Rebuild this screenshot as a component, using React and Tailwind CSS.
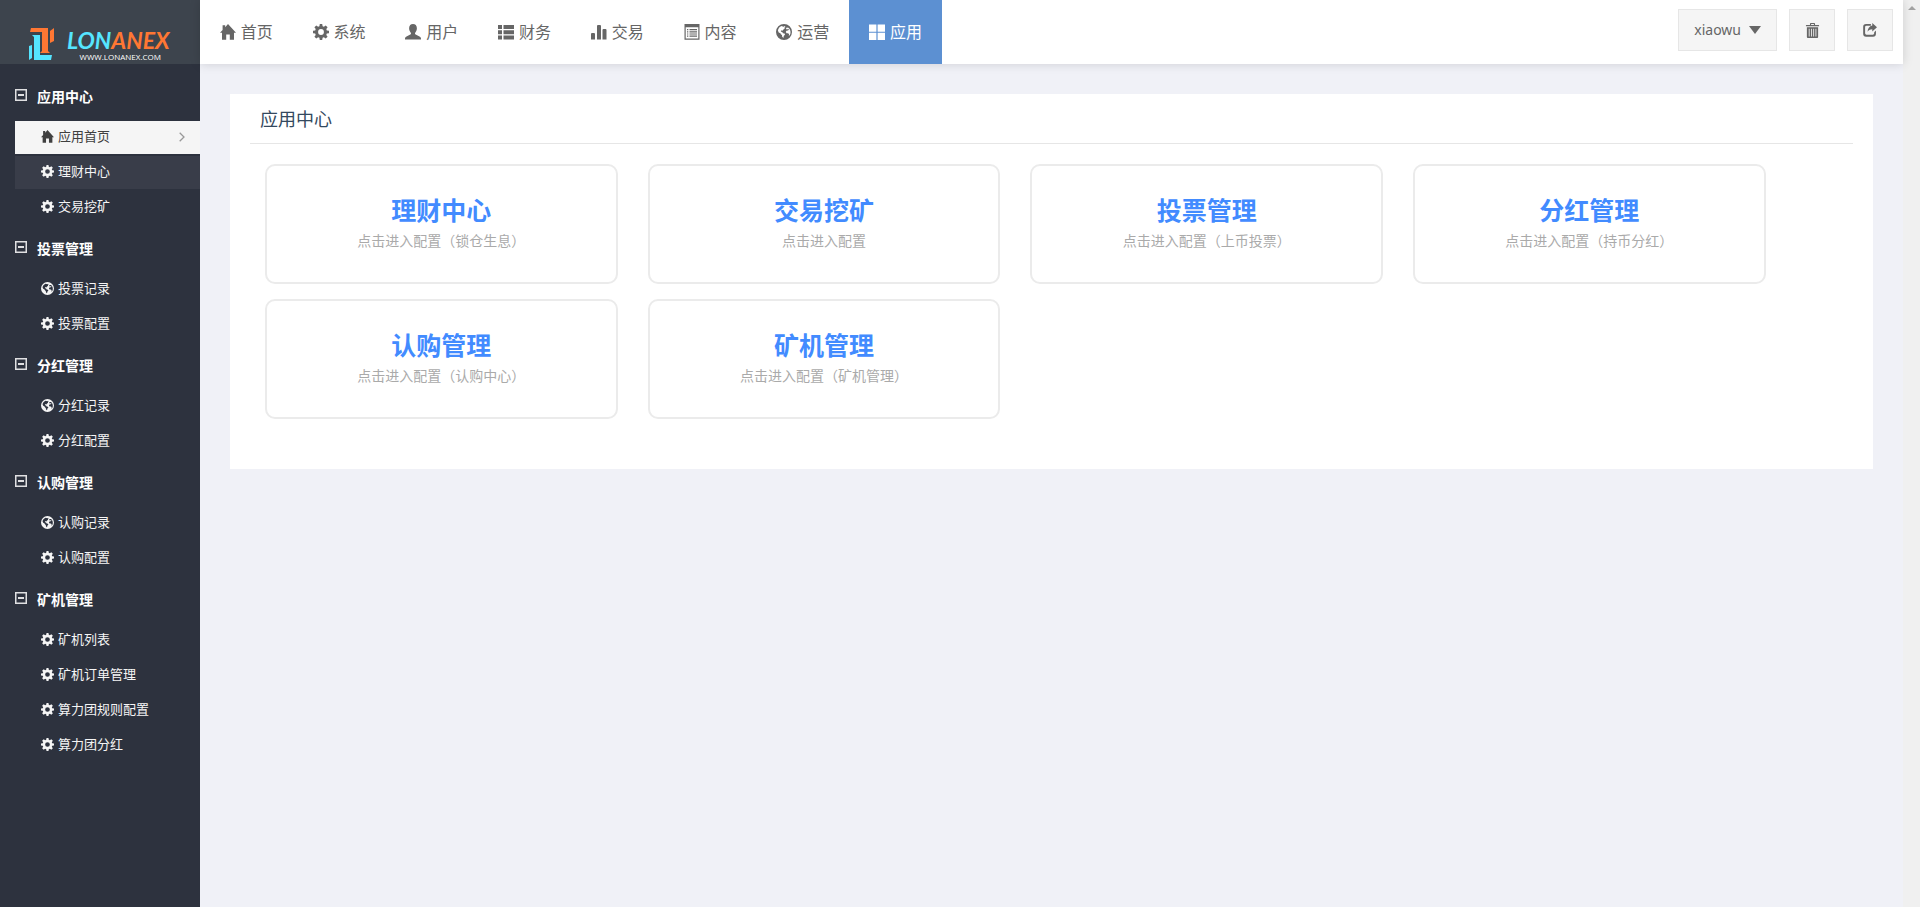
import { useState } from 'react'

const icons = {
  home: <path d="M8 0 16 8.8h-2V15.800H9.800v-5.300H6.200v5.300H2V8.800H0L2.600 6V1.300h2.600v2z" />,
  cog: (
    <path
      fillRule="evenodd"
      d="M6.8 0h2.4l.4 2.2 1.3.5L12.7 1.400l1.900 1.900-1.300 1.800.5 1.300L16 6.800v2.400l-2.200.4-.5 1.300 1.300 1.800-1.900 1.900-1.800-1.300-1.300.5L9.200 16H6.800l-.4-2.200-1.300-.5-1.800 1.300-1.900-1.900 1.300-1.800-.5-1.300L0 9.200V6.800l2.200-.4.5-1.300-1.300-1.800 1.900-1.900 1.800 1.300 1.300-.5zM8 5.100a2.900 2.900 0 1 0 0 5.800 2.900 2.900 0 0 0 0-5.800z"
    />
  ),
  user: (
    <path d="M8 0c2.300 0 3.900 1.600 3.900 4.200 0 1.700-.8 3.300-1.700 4.500-.4.600-.2 1.500.5 1.800l3.800 1.900c1.100.5 1.500 1.200 1.500 2.300V15.500H0V14.700c0-1.100.4-1.800 1.500-2.300l3.800-1.900c.7-.3.900-1.200.5-1.800C4.900 7.500 4.100 5.900 4.100 4.200 4.100 1.600 5.700 0 8 0z" />
  ),
  thList: <path d="M0 1h4v4H0zM5.500 1H16v4H5.500zM0 6.200h4v4H0zM5.500 6.200H16v4H5.500zM0 11.500h4v4H0zM5.500 11.500H16v4H5.500z" />,
  stats: (
    <path d="M0 10q0-1 1-1h2q1 0 1 1v5.500H0zM6 2q0-1 1-1h2q1 0 1 1v13.500H6zM11.500 6q0-1 1-1h2q1 0 1 1v9.500h-4z" />
  ),
  listAlt: (
    <path
      fillRule="evenodd"
      d="M.5 0h15v15.800H.5zM1.700 3.200v11.400h12.600V3.200zM3 5h1.300v1.200H3zM5.500 5H13v1.200H5.500zM3 7.200h1.300v1.200H3zM5.500 7.200H13v1.200H5.500zM3 9.400h1.300v1.200H3zM5.500 9.400H13v1.200H5.500zM3 11.600h1.300v1.200H3zM5.500 11.600H13v1.200H5.500z"
    />
  ),
  globe: (
    <path
      fillRule="evenodd"
      d="M8 0a8 8 0 1 1 0 16A8 8 0 0 1 8 0zM5.500 2C3.500 2.800 2.200 4.600 1.900 6.600l.8 1.800 1.700.9.600 1.200 1.100.6-.2 1.200 1.200 1.400.5-.1.100-1.500 1.300-1.400-.4-1.200L7 9.200 6.200 8l-1.100-.2-.3-.8 1-.8.900.5.500-.9 1.500-1.300-.2-1 1-.5L8.700 2l-.9.800-1-.3zM10.700 3.600l-.8 1.300 1.300.6.900-.7.900 1-1.200.7-1.400.2-.6 1.400.8 1.200 1.500-.1 1 1-.3 1.800 1.100-1c.5-1 .7-2 .6-3.300-.2-1.700-.9-3-2.100-4z"
    />
  ),
  thLarge: <path d="M0 .5h7.400v7.200H0zM8.600 .5H16v7.200H8.600zM0 8.800h7.400V16H0zM8.600 8.800H16V16H8.600z" />,
  trash: (
    <path
      fillRule="evenodd"
      d="M5.300 2V.9Q5.300 0 6.200 0h3.600q.9 0 .9.900V2h3.800q.5 0 .5.500v.9H1v-.9Q1 2 1.500 2zM6.500 1.100V2h3v-.9zM2 4.400h12V15q0 1-1 1H3q-1 0-1-1zM4 6v8.500h.9V6zM6.400 6v8.500h.9V6zM8.800 6v8.500h.9V6zM11.200 6v8.500h.9V6z"
    />
  ),
  share: (
    <path d="M10.600 0 16 4.900l-5.400 4.900V7C8.300 7 6.800 7.700 5.200 10c.2-3.700 2-6.600 5.400-7.200zM9 1v2H4Q2.400 3 2.400 4.600v7.200Q2.400 13.400 4 13.400h7.200q1.600 0 1.600-1.600V10.500l2-1.800v3.600q0 3.300-3.300 3.300H3.500Q.2 15.600.2 12.300V4.300Q.2 1 3.500 1z" />
  ),
  minusSquare: (
    <path fillRule="evenodd" d="M0 0h16v16H0zM2 2v12h12V2zM4 6.700h8v2.600H4z" />
  ),
}

function Icon({ name, className }) {
  return (
    <svg viewBox="0 0 16 16" fill="currentColor" aria-hidden="true" className={`shrink-0 ${className}`}>
      {icons[name]}
    </svg>
  )
}

const navItems = [
  { label: '首页', icon: 'home' },
  { label: '系统', icon: 'cog' },
  { label: '用户', icon: 'user' },
  { label: '财务', icon: 'thList' },
  { label: '交易', icon: 'stats' },
  { label: '内容', icon: 'listAlt' },
  { label: '运营', icon: 'globe' },
  { label: '应用', icon: 'thLarge', active: true },
]

const menu = [
  {
    title: '应用中心',
    items: [
      { label: '应用首页', icon: 'home', active: true },
      { label: '理财中心', icon: 'cog', hovered: true },
      { label: '交易挖矿', icon: 'cog' },
    ],
  },
  {
    title: '投票管理',
    items: [
      { label: '投票记录', icon: 'globe' },
      { label: '投票配置', icon: 'cog' },
    ],
  },
  {
    title: '分红管理',
    items: [
      { label: '分红记录', icon: 'globe' },
      { label: '分红配置', icon: 'cog' },
    ],
  },
  {
    title: '认购管理',
    items: [
      { label: '认购记录', icon: 'globe' },
      { label: '认购配置', icon: 'cog' },
    ],
  },
  {
    title: '矿机管理',
    items: [
      { label: '矿机列表', icon: 'cog' },
      { label: '矿机订单管理', icon: 'cog' },
      { label: '算力团规则配置', icon: 'cog' },
      { label: '算力团分红', icon: 'cog' },
    ],
  },
]

const apps = [
  { title: '理财中心', desc: '点击进入配置（锁仓生息）' },
  { title: '交易挖矿', desc: '点击进入配置' },
  { title: '投票管理', desc: '点击进入配置（上币投票）' },
  { title: '分红管理', desc: '点击进入配置（持币分红）' },
  { title: '认购管理', desc: '点击进入配置（认购中心）' },
  { title: '矿机管理', desc: '点击进入配置（矿机管理）' },
]

function Logo() {
  return (
    <a href="#" className="flex h-16 items-end gap-3 bg-[#3d444d] pb-1 pl-7">
      <svg viewBox="0 0 27 33" className="h-[33px] w-[27px] shrink-0" aria-hidden="true">
        <path fill="#ff7733" d="M3 1h17v23l2 2H12l2-2V5H2z" />
        <path fill="#ff7733" d="M22 4l4-3v13l-4 2z" />
        <path fill="#55e5ff" d="M4 8h8v20h12l-1 5H6V10z" />
        <path fill="#55e5ff" d="M1 19l3-1v13l-3 2z" />
      </svg>
      <span className="flex flex-col items-center">
        <span className="font-['Lato'] text-[23px] leading-[27px] font-bold text-[#ff7733] italic">
          <span className="text-[#55e5ff]">LON</span>ANEX
        </span>
        <span className="pl-1 font-['Open_Sans'] text-[8px] leading-[6px] text-white">WWW.LONANEX.COM</span>
      </span>
    </a>
  )
}

function MenuGroup({ title, items }) {
  const [open, setOpen] = useState(true)

  return (
    <li>
      <button
        onClick={() => setOpen((v) => !v)}
        aria-expanded={open}
        className="flex h-[47px] w-full items-center gap-[10px] pb-0.5 text-sm font-bold text-white"
      >
        <Icon name="minusSquare" className="mb-1 h-3 w-3 text-[#e0e0e2]" />
        {title}
      </button>
      {open && (
        <ul>
          {items.map(({ label, icon, active, hovered }) => (
            <li key={label} className="pb-0.5">
              <a
                href="#"
                className={`flex h-[33px] items-center gap-1 pr-[15px] pb-0.5 pl-[26px] text-[13px] ${
                  active ? 'bg-[#f5f5f5] text-[#404040]' : 'text-[#f5f5f5] hover:bg-[#393d49]'
                } ${hovered ? 'bg-[#393d49]' : ''}`}
              >
                <Icon name={icon} className="h-[13px] w-[13px]" />
                {label}
                {active && (
                  <svg viewBox="0 0 6 10" className="ml-auto h-[10px] w-[6px]" aria-hidden="true">
                    <path d="M.7.7 5 5 .7 9.300" fill="none" stroke="#999" strokeWidth="1.300" />
                  </svg>
                )}
              </a>
            </li>
          ))}
        </ul>
      )}
    </li>
  )
}

function Header() {
  return (
    <header className="relative flex h-16 items-start justify-between bg-white pr-[10px] text-[#666] shadow-[0_0_10px_rgba(0,0,0,0.15)]">
      <nav className="grid h-full w-[742px] grid-cols-8">
        {navItems.map(({ label, icon, active }) => (
          <a
            key={label}
            href="#"
            className={`flex items-center justify-center gap-[5px] text-base ${
              active ? 'bg-[#5c90d2] text-white' : 'hover:bg-gray-50'
            }`}
          >
            <Icon name={icon} className="h-4 w-4" />
            {label}
          </a>
        ))}
      </nav>
      <div className="flex gap-3 pt-[9px]">
        <button className="flex h-[42px] items-center gap-2 border border-[#e6e6e6] bg-[#f5f5f5] px-[15px] text-sm">
          xiaowu
          <svg viewBox="0 0 12 8" fill="currentColor" className="h-2 w-3" aria-hidden="true">
            <path d="M0 0h12L6 8z" />
          </svg>
        </button>
        <button
          aria-label="清除缓存"
          className="flex h-[42px] w-[46px] items-center justify-center border border-[#e6e6e6] bg-[#f5f5f5]"
        >
          <Icon name="trash" className="h-[15px] w-[15px]" />
        </button>
        <button
          aria-label="退出"
          className="flex h-[42px] w-[46px] items-center justify-center border border-[#e6e6e6] bg-[#f5f5f5]"
        >
          <Icon name="share" className="h-[14px] w-[14px]" />
        </button>
      </div>
    </header>
  )
}

export default function App() {
  return (
    <div className="flex min-h-screen bg-[#f0f1f7] font-['Noto_Sans','Noto_Sans_CJK_SC',sans-serif]">
      <aside className="w-[200px] shrink-0 bg-[#2d323e]">
        <Logo />
        <ul className="pt-[10px] pl-[15px]">
          {menu.map((group) => (
            <MenuGroup key={group.title} {...group} />
          ))}
        </ul>
      </aside>

      <div className="min-w-0 flex-1">
        <Header />
        <main className="m-[30px] bg-white px-5 pb-[35px]">
          <h1 className="border-b border-[#e6e6e6] px-[10px] pt-[13px] pb-[11px] text-lg leading-[25px] text-[#34495e]">
            应用中心
          </h1>
          <div className="flex flex-wrap pt-5">
            {apps.map(({ title, desc }) => (
              <a
                key={title}
                href="#"
                className="mx-[15px] mb-[15px] flex h-[120px] w-[22%] flex-col items-center rounded-[10px] border-2 border-[#ebebeb] pt-[27px]"
              >
                <span className="text-[25px] leading-[34px] font-bold text-[#428bff]">{title}</span>
                <span className="text-sm leading-7 text-[#aaa]">{desc}</span>
              </a>
            ))}
          </div>
        </main>
      </div>

      <div className="flex w-[17px] shrink-0 justify-center bg-[#f0f0f0] pt-1.5" aria-hidden="true">
        <svg viewBox="0 0 8 4" className="h-1 w-2">
          <path d="M4 0 8 4H0z" fill="#a3a3a3" />
        </svg>
      </div>
    </div>
  )
}
